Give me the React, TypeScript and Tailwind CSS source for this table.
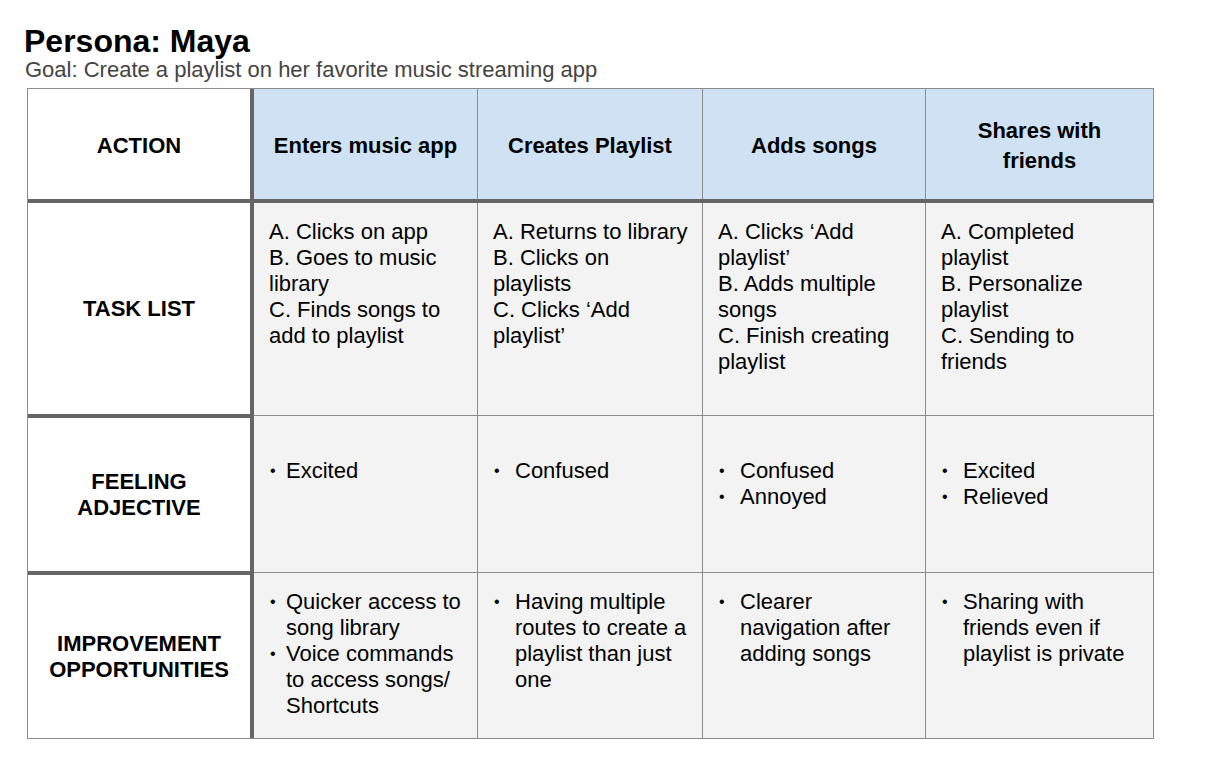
import React from 'react'

// column widths (incl. 1px right border on the first three)
const cols = ['w-[224px]', 'w-[225px]', 'w-[223px]', 'w-[227px]']

type Cell = React.ReactNode

function Bullets({ items, gap }: { items: Cell[]; gap: string }) {
  return (
    <ul>
      {items.map((it, i) => (
        <li key={i} className="flex">
          <span className={`${gap} shrink-0 pl-px text-[16px]`}>•</span>
          <span>{it}</span>
        </li>
      ))}
    </ul>
  )
}

function Row({ label, h, pt, cells }: { label: Cell; h: string; pt: string; cells: Cell[] }) {
  return (
    <div className={`flex ${h}`}>
      <div className="w-[222px] flex items-center justify-center text-center font-bold bg-white">{label}</div>
      <div className="w-[4px] bg-[#656565]" />
      {cells.map((c, i) => (
        <div
          key={i}
          className={`${cols[i]} ${i < 3 ? 'border-r border-[#8c8c8c]' : ''} bg-[#f3f3f3] pl-[15px] ${pt}`}
        >
          {c}
        </div>
      ))}
    </div>
  )
}

function Divider() {
  return (
    <div className="flex h-[4px]">
      <div className="w-[226px] bg-[#656565]" />
      {cols.map((w, i) => (
        <div key={i} className={`${w} ${i < 3 ? 'border-r border-[#8c8c8c]' : ''} bg-[#f3f3f3] pt-px`}>
          <div className="h-px bg-[#8c8c8c]" />
        </div>
      ))}
    </div>
  )
}

export default function App() {
  const heads = ['Enters music app', 'Creates Playlist', 'Adds songs', <>Shares with<br />friends</>]

  return (
    <div className="min-h-screen bg-white font-['Liberation_Sans',Arial,sans-serif] text-black text-[22px] leading-[26px]">
      <h1 className="pl-[24px] pt-[24px] text-[32px] font-bold leading-[34px]">Persona: Maya</h1>
      <p className="pl-[25px] leading-[24px] text-[#444]">Goal: Create a playlist on her favorite music streaming app</p>

      <div className="ml-[27px] mt-[6px] w-[1127px] border border-[#8c8c8c]">
        {/* header */}
        <div className="flex h-[110px] font-bold">
          <div className="w-[222px] flex items-center justify-center pt-[3px]">ACTION</div>
          <div className="w-[4px] bg-[#656565]" />
          {heads.map((t, i) => (
            <div
              key={i}
              className={`${cols[i]} ${i < 3 ? 'border-r border-[#8c8c8c]' : ''} bg-[#cfe2f3] flex items-center justify-center text-center leading-[30px] pt-[3px]`}
            >
              <div>{t}</div>
            </div>
          ))}
        </div>
        <div className="h-[4px] bg-[#656565]" />

        <Row
          label="TASK LIST"
          h="h-[211px]"
          pt="pt-[16px]"
          cells={[
            <>A. Clicks on app<br />B. Goes to music<br />library<br />C. Finds songs to<br />add to playlist</>,
            <>A. Returns to library<br />B. Clicks on<br />playlists<br />C. Clicks ‘Add<br />playlist’</>,
            <>A. Clicks ‘Add<br />playlist’<br />B. Adds multiple<br />songs<br />C. Finish creating<br />playlist</>,
            <>A. Completed<br />playlist<br />B. Personalize<br />playlist<br />C. Sending to<br />friends</>,
          ]}
        />
        <Divider />

        <Row
          label={<>FEELING<br />ADJECTIVE</>}
          h="h-[153px]"
          pt="pt-[40px]"
          cells={[
            <Bullets gap="w-[17px]" items={['Excited']} />,
            <Bullets gap="w-[22px]" items={['Confused']} />,
            <Bullets gap="w-[22px]" items={['Confused', 'Annoyed']} />,
            <Bullets gap="w-[22px]" items={['Excited', 'Relieved']} />,
          ]}
        />
        <Divider />

        <Row
          label={<>IMPROVEMENT<br />OPPORTUNITIES</>}
          h="h-[163px]"
          pt="pt-[14px]"
          cells={[
            <Bullets
              gap="w-[17px]"
              items={[<>Quicker access to<br />song library</>, <>Voice commands<br />to access songs/<br />Shortcuts</>]}
            />,
            <Bullets gap="w-[22px]" items={[<>Having multiple<br />routes to create a<br />playlist than just<br />one</>]} />,
            <Bullets gap="w-[22px]" items={[<>Clearer<br />navigation after<br />adding songs</>]} />,
            <Bullets gap="w-[22px]" items={[<>Sharing with<br />friends even if<br />playlist is private</>]} />,
          ]}
        />
      </div>
    </div>
  )
}
